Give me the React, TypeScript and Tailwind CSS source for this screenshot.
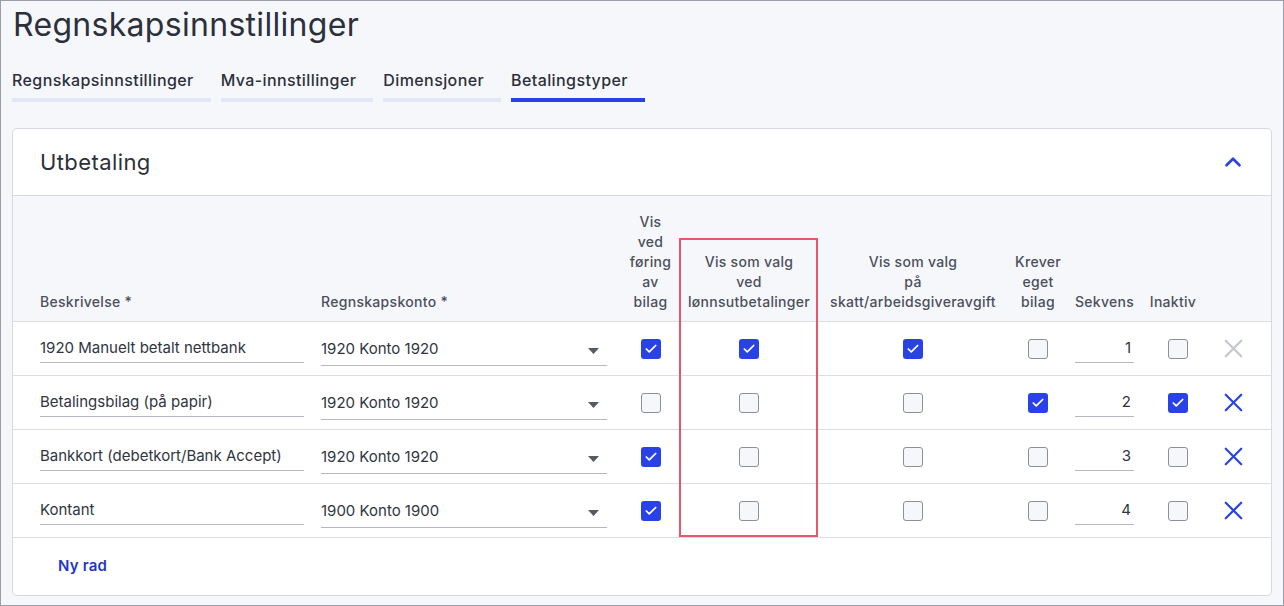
import { X, ChevronUp, Check } from "lucide-react";

type Row = {
  desc: string;
  account: string;
  posting: boolean;
  payroll: boolean;
  tax: boolean;
  ownVoucher: boolean;
  seq: number;
  inactive: boolean;
  locked?: boolean;
};

const rows: Row[] = [
  { desc: "1920 Manuelt betalt nettbank", account: "1920 Konto 1920", posting: true, payroll: true, tax: true, ownVoucher: false, seq: 1, inactive: false, locked: true },
  { desc: "Betalingsbilag (på papir)", account: "1920 Konto 1920", posting: false, payroll: false, tax: false, ownVoucher: true, seq: 2, inactive: true },
  { desc: "Bankkort (debetkort/Bank Accept)", account: "1920 Konto 1920", posting: true, payroll: false, tax: false, ownVoucher: false, seq: 3, inactive: false },
  { desc: "Kontant", account: "1900 Konto 1900", posting: true, payroll: false, tax: false, ownVoucher: false, seq: 4, inactive: false },
];

const tabs = [
  { label: "Regnskapsinnstillinger", active: false },
  { label: "Mva-innstillinger", active: false },
  { label: "Dimensjoner", active: false },
  { label: "Betalingstyper", active: true },
];

const cols = "grid grid-cols-[281px_301px_57px_140px_188px_62px_71px_76px_34px]";

function Box({ checked }: { checked: boolean }) {
  if (checked) {
    return (
      <span className="flex h-5 w-5 items-center justify-center rounded-[3px] bg-[#2942e8]">
        <Check size={14} strokeWidth={3} className="text-white" />
      </span>
    );
  }
  return <span className="block h-5 w-5 rounded-[3px] border border-[#8c9099] bg-[#f6f7fa]" />;
}

function Cell({ children }: { children: React.ReactNode }) {
  return <div className="flex items-center justify-center">{children}</div>;
}

export default function App() {
  return (
    <div className="h-[606px] w-[1284px] overflow-hidden border border-[#9b9ea6] bg-[#f6f7fb] font-['Inter',sans-serif] text-[#2c313b]">
      <h1 className="pl-3 pt-[5px] text-[32px] font-normal leading-[38px] tracking-[0.3px] text-[#2b303b]">
        Regnskapsinnstillinger
      </h1>

      <div className="mt-[26px] flex gap-[10px] pl-[11px]">
        {tabs.map((t) => (
          <div
            key={t.label}
            className={
              "pr-[17px] pb-[8px] text-[16px] font-medium leading-5 tracking-[0.4px] text-[#2b303b] border-b-4 " +
              (t.active ? "border-[#2942e8]" : "border-[#e2e7f5]")
            }
          >
            {t.label}
          </div>
        ))}
      </div>

      <div className="relative mx-[11px] mt-[26px] overflow-hidden rounded-[5px] border border-[#d6d9df] bg-white">
        <div className="flex h-[67px] items-center justify-between border-b border-[#d6d9df] pl-[27px] pr-[25px]">
          <h2 className="text-[22px] font-normal tracking-[0.4px] text-[#2b303b]">Utbetaling</h2>
          <ChevronUp size={26} strokeWidth={2.4} className="text-[#2942e8]" />
        </div>

        <div className={cols + " items-end border-b border-[#dcdee3] bg-[#f6f7fb] pb-[9px] pl-[27px] pt-[16px] text-center text-[14px] font-medium leading-5 tracking-[0.3px] text-[#4b505b]"}>
          <div className="text-left">Beskrivelse *</div>
          <div className="text-left">Regnskapskonto *</div>
          <div>
            Vis
            <br />
            ved
            <br />
            føring
            <br />
            av
            <br />
            bilag
          </div>
          <div>
            Vis som valg
            <br />
            ved
            <br />
            lønnsutbetalinger
          </div>
          <div>
            Vis som valg
            <br />
            på
            <br />
            skatt/arbeidsgiveravgift
          </div>
          <div>
            Krever
            <br />
            eget
            <br />
            bilag
          </div>
          <div>Sekvens</div>
          <div className="pr-[10px]">Inaktiv</div>
          <div />
        </div>

        {rows.map((r) => (
          <div key={r.desc} className={cols + " h-[54px] items-center border-b border-[#dcdee3] pl-[27px] text-[15px] text-[#30353f]"}>
            <div className="pr-[17px]">
              <div className="border-b border-[#b5b8bf] pb-[4px] pt-[3px] leading-5">{r.desc}</div>
            </div>
            <div className="pr-[15px]">
              <div className="mt-[4px] flex items-center justify-between border-b border-[#b5b8bf] pb-[6px] pt-[3px] leading-5">
                <span>{r.account}</span>
                <svg width="11" height="6" viewBox="0 0 11 6" className="mr-[8px] mt-[5px]">
                  <path d="M0 0h11L5.5 6z" fill="#555a63" />
                </svg>
              </div>
            </div>
            <Cell><Box checked={r.posting} /></Cell>
            <Cell><Box checked={r.payroll} /></Cell>
            <Cell><Box checked={r.tax} /></Cell>
            <Cell><Box checked={r.ownVoucher} /></Cell>
            <div className="px-[6px]">
              <div className="border-b border-[#b5b8bf] pb-[4px] pt-[3px] pr-[3px] text-right leading-5">{r.seq}</div>
            </div>
            <Cell><Box checked={r.inactive} /></Cell>
            <Cell>
              <X size={31} strokeWidth={1.7} className={r.locked ? "text-[#c3c6cc]" : "text-[#2942e8]"} />
            </Cell>
          </div>
        ))}

        <div className="flex h-[57px] items-center pl-[45px] text-[15px] font-semibold tracking-[0.2px] text-[#2336cc]">Ny rad</div>

        <div className="pointer-events-none absolute left-[666px] top-[109px] h-[299px] w-[139px] border-2 border-[#e9566a]" />
      </div>
    </div>
  );
}
